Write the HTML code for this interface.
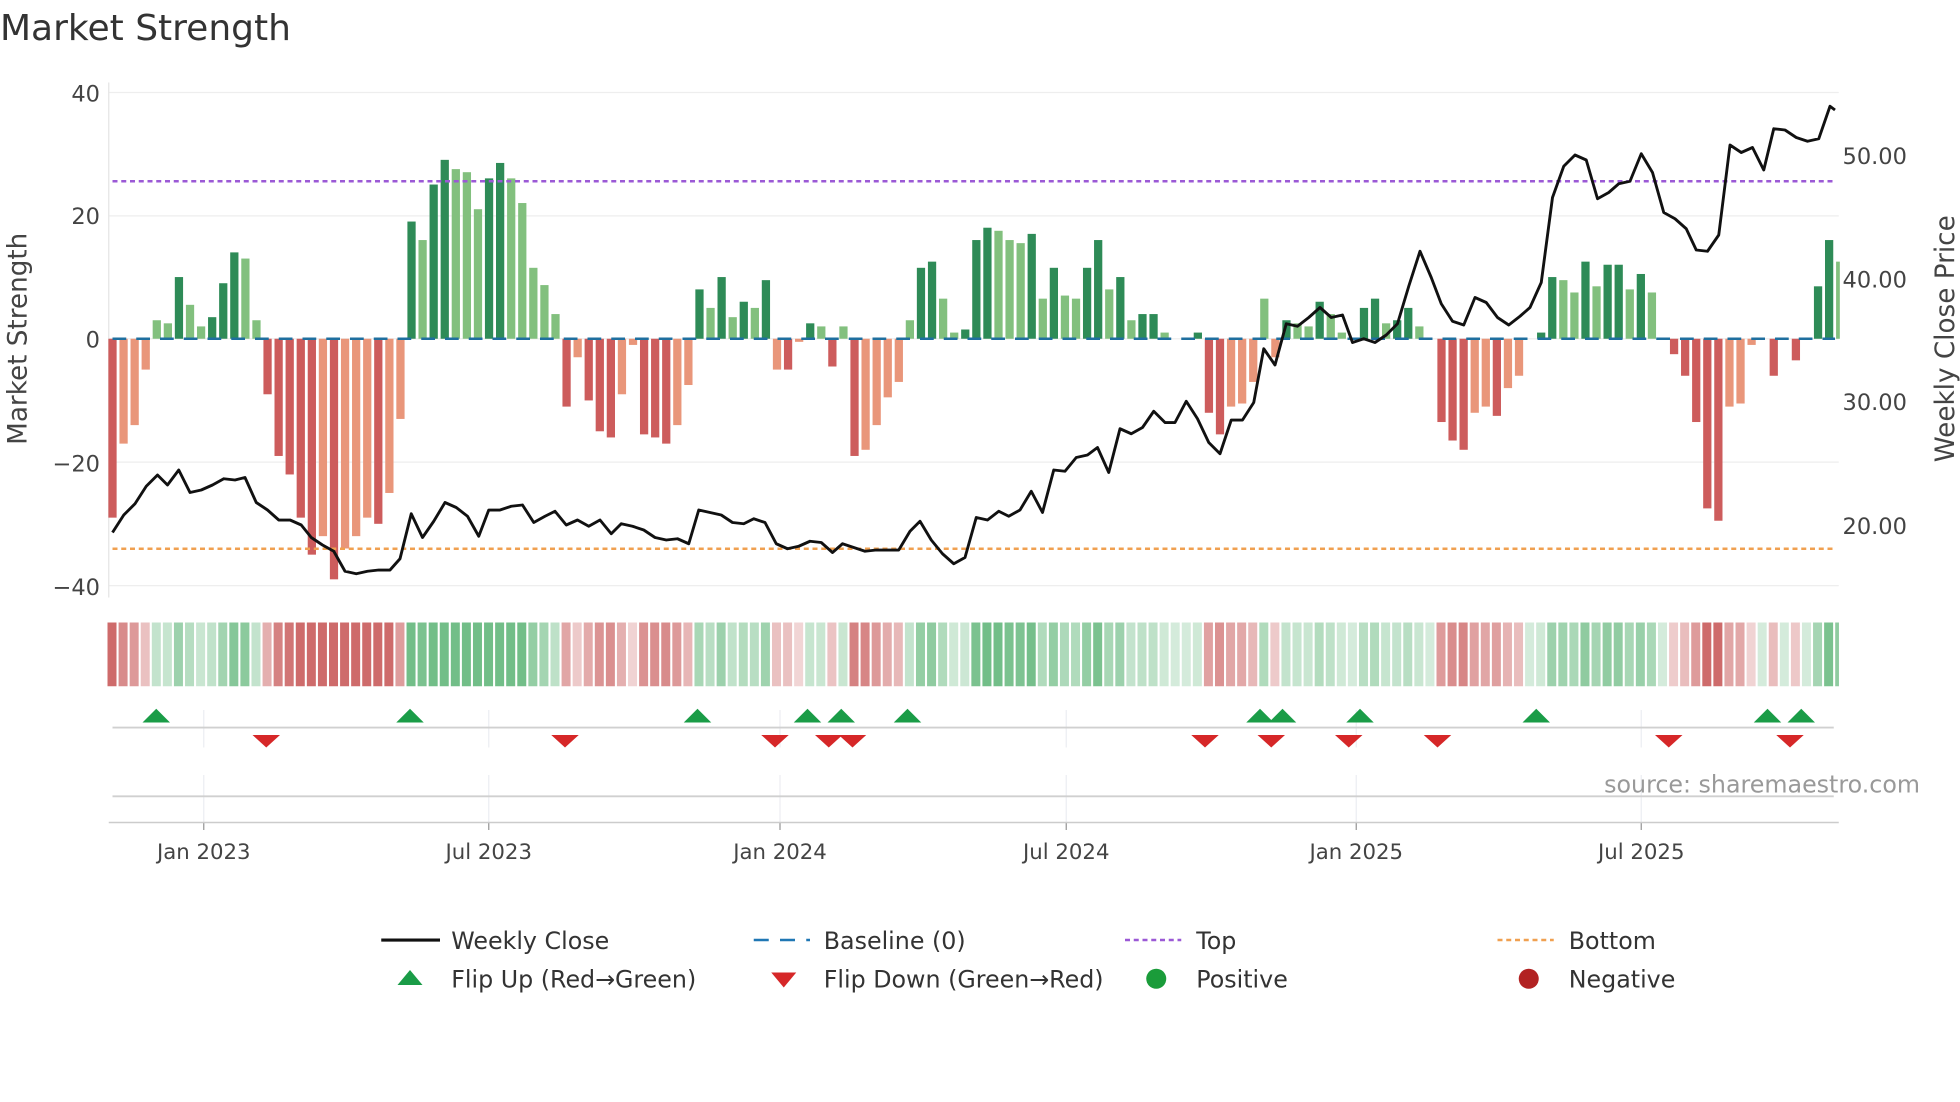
<!DOCTYPE html>
<html><head><meta charset="utf-8"><style>
html,body{margin:0;padding:0;background:#fff;}
svg{display:block;font-family:"DejaVu Sans","Liberation Sans",sans-serif;}
</style></head><body>
<svg id="s" width="1960" height="1102" viewBox="0 0 1568 881.6" xmlns="http://www.w3.org/2000/svg">
<text x="0" y="32" font-size="28.8" fill="#333">Market Strength</text>
<g id="grid"></g>
<g id="bars"></g>
<g id="lines"></g>
<text x="80" y="81" font-size="18" fill="#444" text-anchor="end">40</text>
<text x="80" y="179" font-size="18" fill="#444" text-anchor="end">20</text>
<text x="80" y="278" font-size="18" fill="#444" text-anchor="end">0</text>
<text x="80" y="377" font-size="18" fill="#444" text-anchor="end">−20</text>
<text x="80" y="476" font-size="18" fill="#444" text-anchor="end">−40</text>
<text x="1474" y="131" font-size="18" fill="#444">50.00</text>
<text x="1474" y="230" font-size="18" fill="#444">40.00</text>
<text x="1474" y="328" font-size="18" fill="#444">30.00</text>
<text x="1474" y="427" font-size="18" fill="#444">20.00</text>
<text transform="translate(21,271) rotate(-90)" font-size="21" fill="#444" text-anchor="middle">Market Strength</text>
<text transform="translate(1563,271) rotate(-90)" font-size="21" fill="#444" text-anchor="middle">Weekly Close Price</text>
<text x="1536" y="634" font-size="19" fill="#999" text-anchor="end">source: sharemaestro.com</text>
<g font-size="17" fill="#444" text-anchor="middle">
<text x="163" y="687">Jan 2023</text><text x="391" y="687">Jul 2023</text><text x="624" y="687">Jan 2024</text>
<text x="853" y="687">Jul 2024</text><text x="1085" y="687">Jan 2025</text><text x="1313" y="687">Jul 2025</text>
</g>
<g font-size="19" fill="#333">
<line x1="305" y1="752" x2="352" y2="752" stroke="#111" stroke-width="2.5"/><text x="361" y="759">Weekly Close</text>
<line x1="603" y1="752" x2="648" y2="752" stroke="#1f77b4" stroke-width="2" stroke-dasharray="12,9"/><text x="659" y="759">Baseline (0)</text>
<line x1="900" y1="752" x2="945" y2="752" stroke="#9b59d6" stroke-width="2" stroke-dasharray="4,3"/><text x="957" y="759">Top</text>
<line x1="1198" y1="752" x2="1243" y2="752" stroke="#f0a050" stroke-width="2" stroke-dasharray="4,3"/><text x="1255" y="759">Bottom</text>
<path d="M318,788 L328,776 L338,788Z" fill="#1a9c47"/><text x="361" y="790">Flip Up (Red→Green)</text>
<path d="M617,778 L637,778 L627,790Z" fill="#d62728"/><text x="659" y="790">Flip Down (Green→Red)</text>
<circle cx="925" cy="783" r="8" fill="#1a9c3a"/><text x="957" y="790">Positive</text>
<circle cx="1223" cy="783" r="8" fill="#b22222"/><text x="1255" y="790">Negative</text>
</g>
</svg>
<script>
var v=[-29,-17,-14,-5,3,2.5,10,5.5,2,3.5,9,14,13,3,-9,-19,-22,-29,-35,-32,-39,-34,-32,-29,-30,-25,-13,19,16,25,29,27.5,27,21,26,28.5,26,22,11.5,8.7,4,-11,-3,-10,-15,-16,-9,-1,-15.5,-16,-17,-14,-7.5,8,5,10,3.5,6,5,9.5,-5,-5,-0.5,2.5,2,-4.5,2,-19,-18,-14,-9.5,-7,3,11.5,12.5,6.5,1,1.5,16,18,17.5,16,15.5,17,6.5,11.5,7,6.5,11.5,16,8,10,3,4,4,1,0,0,1,-12,-15.5,-11,-10.5,-7,6.5,-3,3,2.5,2,6,4,1,0,5,6.5,2.5,3,5,2,0,-13.5,-16.5,-18,-12,-11,-12.5,-8,-6,0,1,10,9.5,7.5,12.5,8.5,12,12,8,10.5,7.5,0,-2.5,-6,-13.5,-27.5,-29.5,-11,-10.5,-1,0,-6,0,-3.5,0,8.5,16,12.5];
var p=[[90,426],[99,412],[108,403],[117,389],[126,380],[134,388],[143,376],[152,394],[161,392],[170,388],[179,383],[188,384],[196,382],[205,402],[214,408],[223,416],[232,416],[241,420],[249,430],[258,436],[267,441],[276,457],[285,459],[294,457],[303,456],[312,456],[320,447],[329,411],[338,430],[347,417],[356,402],[365,406],[374,413],[383,429],[391,408],[400,408],[409,405],[418,404],[427,418],[436,413],[444,409],[453,420],[462,416],[471,421],[480,416],[489,427],[497,419],[506,421],[515,424],[524,430],[533,432],[542,431],[551,435],[559,408],[568,410],[577,412],[586,418],[595,419],[603,415],[612,418],[621,435],[630,439],[639,437],[648,433],[657,434],[666,442],[674,435],[683,438],[692,441],[701,440],[710,440],[719,440],[728,425],[736,417],[745,432],[754,443],[763,451],[772,446],[781,414],[790,416],[799,409],[807,413],[816,408],[825,393],[834,410],[843,376],[852,377],[861,366],[870,364],[878,358],[887,378],[896,343],[905,347],[914,342],[923,329],[932,338],[940,338],[949,321],[958,335],[967,354],[976,363],[985,336],[994,336],[1003,322],[1011,279],[1020,292],[1029,259],[1038,261],[1047,254],[1056,246],[1065,254],[1074,252],[1082,274],[1091,271],[1100,274],[1109,268],[1118,259],[1127,229],[1136,201],[1145,222],[1153,243],[1162,257],[1171,260],[1180,238],[1189,242],[1198,254],[1207,260],[1216,253],[1224,246],[1233,226],[1242,158],[1251,133],[1260,124],[1269,128],[1278,159],[1287,154],[1295,147],[1304,145],[1313,123],[1322,138],[1331,170],[1340,175],[1349,183],[1357,200],[1366,201],[1375,188],[1384,116],[1393,122],[1402,118],[1411,136],[1419,103],[1428,104],[1437,110],[1446,113],[1455,111],[1464,85],[1468,88]];
var up=[125,328,558,646,673,726,1008,1026,1088,1229,1414,1441],dn=[213,452,620,663,682,964,1017,1079,1150,1335,1432];
var g='',b='',l='';
[74,172.7,271,369.7,468.5].forEach(function(y){g+='<line x1="87" x2="1471" y1="'+y+'" y2="'+y+'" stroke="#eee" stroke-width="1"/>';});
g+='<line x1="87" x2="87" y1="66" y2="478" stroke="#e4e4e4"/>';
[163,391,624,853,1085,1313].forEach(function(x){g+='<line x1="'+x+'" x2="'+x+'" y1="568" y2="598" stroke="#eceef2"/><line x1="'+x+'" x2="'+x+'" y1="620" y2="662" stroke="#eceef2"/><line x1="'+x+'" x2="'+x+'" y1="658" y2="664" stroke="#999"/>';});
g+='<line x1="90" x2="1467" y1="582" y2="582" stroke="#d0d0d0" stroke-width="1.5"/><line x1="90" x2="1467" y1="637" y2="637" stroke="#d0d0d0" stroke-width="1.5"/><line x1="87" x2="1471" y1="658" y2="658" stroke="#ccc" stroke-width="1.2"/>';
var k=4.935;
for(var i=0;i<v.length;i++){
 var x=90+8.86*i,val=v[i],prev=i?Math.abs(v[i-1]):0,grow=Math.abs(val)>=prev;
 var c=val>=0?(grow?'#2e8b57':'#82c07e'):(grow?'#cd5c5c':'#e9967a');
 var h=Math.abs(val)*k,y=val>=0?271-h:271;
 var w=(i==v.length-1)?3:6.6;
 if(h>0.3)b+='<rect x="'+(x-3.3)+'" y="'+y+'" width="'+w+'" height="'+h+'" fill="'+c+'"/>';
 var hc=val>=0?'rgba(60,165,90,'+(0.22+Math.min(0.5,Math.abs(val)/35))+')':'rgba(195,75,75,'+(0.22+Math.min(0.6,Math.abs(val)/40))+')';
 var sw=(i==v.length-1)?3:7.2;
 b+='<rect x="'+(x-4)+'" y="498" width="'+sw+'" height="51" fill="'+hc+'"/>';
}
b+='<line x1="90" x2="1468" y1="271" y2="271" stroke="#1f6f9f" stroke-width="2" stroke-dasharray="11,8"/>';
l+='<line x1="90" x2="1468" y1="145" y2="145" stroke="#9b59d6" stroke-width="2" stroke-dasharray="4,3"/>';
l+='<line x1="90" x2="1468" y1="439" y2="439" stroke="#f0a050" stroke-width="2" stroke-dasharray="4,3"/>';
l+='<polyline fill="none" stroke="#111" stroke-width="2.3" stroke-linejoin="round" points="'+p.map(function(q){return q.join(',')}).join(' ')+'"/>';
up.forEach(function(x){l+='<path d="M'+(x-11)+',578 L'+x+',567 L'+(x+11)+',578Z" fill="#1a9c47"/>';});
dn.forEach(function(x){l+='<path d="M'+(x-11)+',588 L'+(x+11)+',588 L'+x+',598Z" fill="#d62728"/>';});
document.getElementById('grid').innerHTML=g;
document.getElementById('bars').innerHTML=b;
document.getElementById('lines').innerHTML=l;
</script>
</body></html>
